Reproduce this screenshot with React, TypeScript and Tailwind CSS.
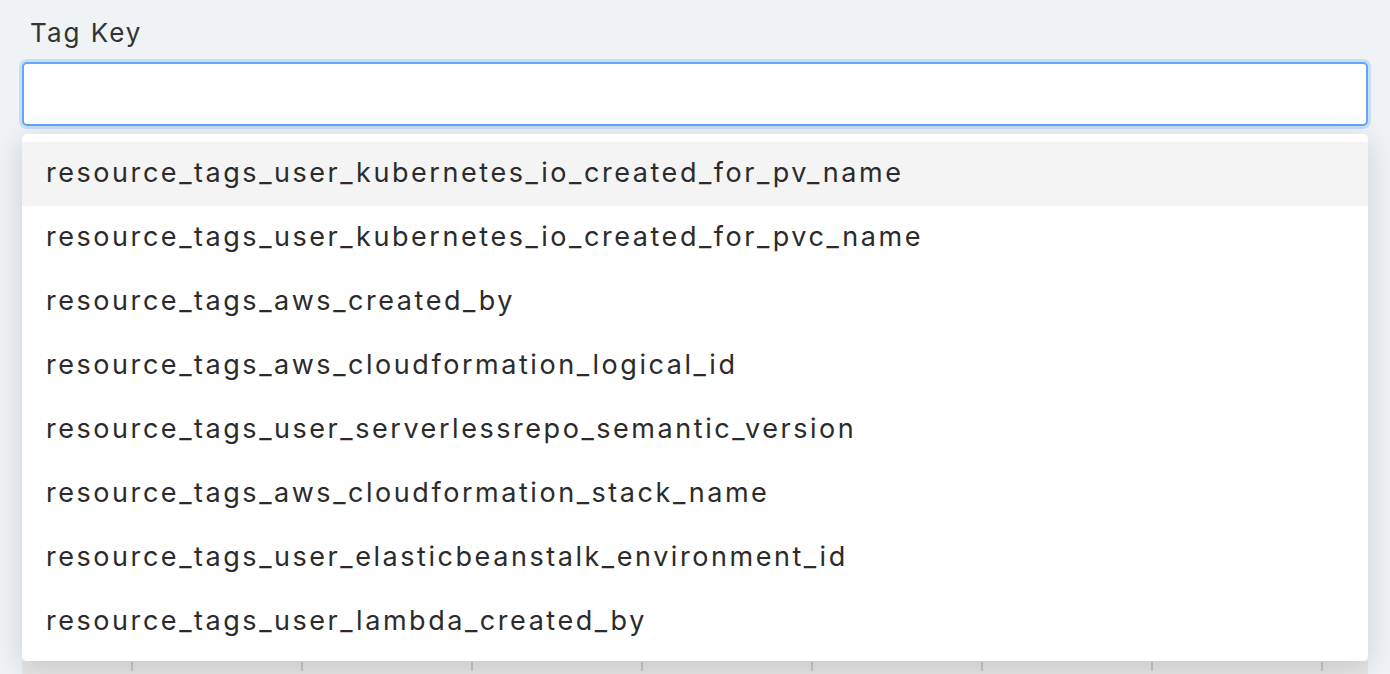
import React from "react";

const items = [
  "resource_tags_user_kubernetes_io_created_for_pv_name",
  "resource_tags_user_kubernetes_io_created_for_pvc_name",
  "resource_tags_aws_created_by",
  "resource_tags_aws_cloudformation_logical_id",
  "resource_tags_user_serverlessrepo_semantic_version",
  "resource_tags_aws_cloudformation_stack_name",
  "resource_tags_user_elasticbeanstalk_environment_id",
  "resource_tags_user_lambda_created_by",
];

const ticks = [131, 301, 471, 641, 811, 981, 1151, 1321];

export default function App() {
  return (
    <div
      className="w-[1390px] h-[674px] overflow-hidden bg-[#f0f3f6] px-[22px] pt-[15px] text-[#2b2b2b]"
      style={{ fontFamily: "Inter, 'Noto Sans', sans-serif" }}
    >
      <div className="pl-[8px] h-[36px] leading-[36px] text-[26px] tracking-[2px] text-[#333]">Tag Key</div>
      <div className="mt-[11px] h-[64px] rounded-[5px] border-2 border-[#62a6f6] bg-white shadow-[0_0_0_3px_rgba(96,165,250,0.28)]"></div>
      <div className="relative mt-[8px]">
        <div className="relative z-10 rounded-[5px] bg-white pt-[8px] pb-[7px] shadow-[0_6px_30px_rgba(0,0,0,0.15)]">
          {items.map((t, i) => (
            <div
              key={t}
              className={`h-[64px] flex items-center pl-[24px] text-[27px] tracking-[2.55px] ${i === 0 ? "bg-[#f4f4f4]" : ""}`}
            >
              <span className="-mt-[1px]">{t}</span>
            </div>
          ))}
        </div>
        <div className="relative h-[20px] bg-[#e6e6e6]">
          {ticks.map((x) => (
            <div key={x} className="absolute top-[1px] h-[9px] w-[2px] bg-[#c3c6ca]" style={{ left: x - 22 }} />
          ))}
        </div>
      </div>
    </div>
  );
}
